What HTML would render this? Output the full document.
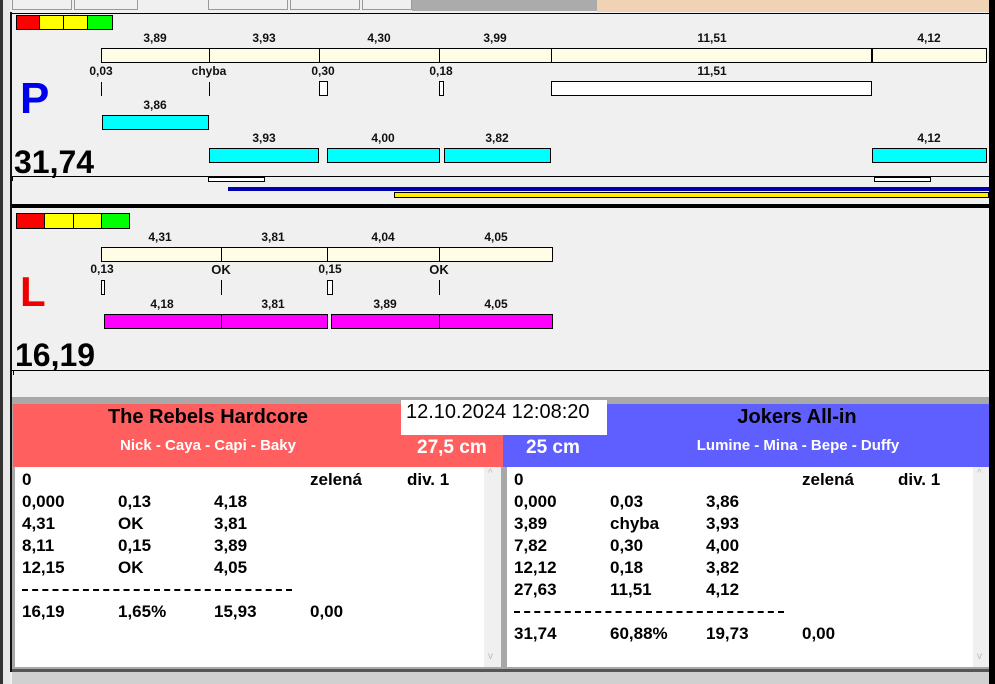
<!DOCTYPE html>
<html><head><meta charset="utf-8"><style>
*{margin:0;padding:0;box-sizing:border-box}
body{width:995px;height:684px;position:relative;background:#f0f0f0;font-family:"Liberation Sans",Arial,sans-serif;overflow:hidden}
div,span{position:absolute}
.t{font-weight:bold;font-size:12px;color:#111;white-space:nowrap;transform:translateX(-50%)}
.cr{background:#fffde6;border:1px solid #000;height:15px}
.cy{background:#00ffff;border:1px solid #000;height:15px}
.mg{background:#ff00ff;border:1px solid #000;height:15px}
.wb{background:#fff;border:1px solid #000}
.tk{width:1px;background:#000}
.row{font-weight:bold;font-size:17px;color:#000;white-space:nowrap}
</style></head><body>
<!-- top tabs -->
<div style="left:0;top:0;width:995px;height:12px;background:#f0f0f0"></div>
<div style="left:12px;top:0;width:60px;height:10px;border:1px solid #999;border-top:none;background:#f0f0f0"></div>
<div style="left:74px;top:0;width:64px;height:10px;border:1px solid #999;border-top:none;background:#f0f0f0"></div>
<div style="left:208px;top:0;width:80px;height:10px;border:1px solid #999;border-top:none;background:#f0f0f0"></div>
<div style="left:290px;top:0;width:70px;height:10px;border:1px solid #999;border-top:none;background:#f0f0f0"></div>
<div style="left:362px;top:0;width:50px;height:10px;border:1px solid #999;border-top:none;background:#f0f0f0"></div>
<div style="left:412px;top:0;width:185px;height:11px;background:#ababab"></div>
<div style="left:597px;top:0;width:393px;height:12px;background:#f0d2b4"></div>
<!-- left edge -->
<div style="left:0;top:0;width:3px;height:684px;background:#333"></div>
<div style="left:3px;top:0;width:7px;height:684px;background:#e8e8e8"></div>
<div style="left:10px;top:12px;width:2px;height:660px;background:#111"></div>
<!-- right edge -->
<div style="left:989px;top:0;width:6px;height:684px;background:#000"></div>
<!-- panel 1 -->
<div style="left:12px;top:13px;width:977px;height:1px;background:#000"></div>
<div style="left:16px;top:15px;width:24px;height:15px;background:#f00;border:1px solid #000"></div>
<div style="left:39px;top:15px;width:25px;height:15px;background:#ff0;border:1px solid #000"></div>
<div style="left:63px;top:15px;width:25px;height:15px;background:#ff0;border:1px solid #000"></div>
<div style="left:87px;top:15px;width:26px;height:15px;background:#0f0;border:1px solid #000"></div>

<span class="t" style="left:155px;top:31px">3,89</span>
<span class="t" style="left:264px;top:31px">3,93</span>
<span class="t" style="left:379px;top:31px">4,30</span>
<span class="t" style="left:495px;top:31px">3,99</span>
<span class="t" style="left:712px;top:31px">11,51</span>
<span class="t" style="left:929px;top:31px">4,12</span>
<div class="cr" style="left:101px;top:48px;width:886px"></div>
<div class="tk" style="left:209px;top:48px;height:15px"></div>
<div class="tk" style="left:319px;top:48px;height:15px"></div>
<div class="tk" style="left:439px;top:48px;height:15px"></div>
<div class="tk" style="left:551px;top:48px;height:15px"></div>
<div style="left:871px;top:48px;width:2px;height:15px;background:#000"></div>

<span class="t" style="left:101px;top:64px">0,03</span>
<span class="t" style="left:209px;top:64px">chyba</span>
<span class="t" style="left:323px;top:64px">0,30</span>
<span class="t" style="left:441px;top:64px">0,18</span>
<span class="t" style="left:712px;top:64px">11,51</span>
<div class="tk" style="left:101px;top:82px;height:14px"></div>
<div class="tk" style="left:209px;top:82px;height:14px"></div>
<div class="wb" style="left:319px;top:81px;width:9px;height:15px"></div>
<div class="wb" style="left:439px;top:81px;width:5px;height:15px"></div>
<div class="wb" style="left:551px;top:81px;width:321px;height:15px"></div>

<span style="left:20px;top:74px;font-size:44px;font-weight:bold;color:#0000ee;line-height:50px">P</span>
<span class="t" style="left:155px;top:98px">3,86</span>
<div class="cy" style="left:102px;top:115px;width:107px"></div>
<span class="t" style="left:264px;top:131px">3,93</span>
<span class="t" style="left:383px;top:131px">4,00</span>
<span class="t" style="left:497px;top:131px">3,82</span>
<span class="t" style="left:929px;top:131px">4,12</span>
<div class="cy" style="left:209px;top:148px;width:110px"></div>
<div class="cy" style="left:327px;top:148px;width:113px"></div>
<div class="cy" style="left:444px;top:148px;width:107px"></div>
<div class="cy" style="left:872px;top:148px;width:115px"></div>
<span style="left:14px;top:142px;font-size:32px;font-weight:bold;color:#000;line-height:40px">31,74</span>
<div style="left:12px;top:176px;width:977px;height:1px;background:#000"></div>
<div class="tk" style="left:12px;top:176px;height:5px"></div>
<div class="wb" style="left:208px;top:177px;width:57px;height:5px"></div>
<div class="wb" style="left:874px;top:177px;width:57px;height:5px"></div>
<div style="left:228px;top:187px;width:761px;height:4px;background:#0000b0"></div>
<div style="left:394px;top:192px;width:595px;height:6px;background:#ffee00;border:1px solid #000"></div>
<div style="left:12px;top:204px;width:977px;height:4px;background:#000"></div>

<!-- panel 2 -->
<div style="left:16px;top:213px;width:29px;height:16px;background:#f00;border:1px solid #000"></div>
<div style="left:44px;top:213px;width:30px;height:16px;background:#ff0;border:1px solid #000"></div>
<div style="left:73px;top:213px;width:29px;height:16px;background:#ff0;border:1px solid #000"></div>
<div style="left:101px;top:213px;width:29px;height:16px;background:#0f0;border:1px solid #000"></div>
<span class="t" style="left:160px;top:230px">4,31</span>
<span class="t" style="left:273px;top:230px">3,81</span>
<span class="t" style="left:383px;top:230px">4,04</span>
<span class="t" style="left:496px;top:230px">4,05</span>
<div class="cr" style="left:101px;top:247px;width:452px"></div>
<div class="tk" style="left:221px;top:247px;height:15px"></div>
<div class="tk" style="left:327px;top:247px;height:15px"></div>
<div class="tk" style="left:439px;top:247px;height:15px"></div>
<span class="t" style="left:102px;top:262px">0,13</span>
<span class="t" style="left:221px;top:262px;font-size:13px">OK</span>
<span class="t" style="left:330px;top:262px">0,15</span>
<span class="t" style="left:439px;top:262px;font-size:13px">OK</span>
<div class="wb" style="left:101px;top:280px;width:4px;height:15px"></div>
<div class="tk" style="left:221px;top:280px;height:15px"></div>
<div class="wb" style="left:327px;top:280px;width:6px;height:15px"></div>
<div class="tk" style="left:439px;top:280px;height:15px"></div>
<span style="left:20px;top:268px;font-size:42px;font-weight:bold;color:#ee0000;line-height:48px">L</span>
<span class="t" style="left:162px;top:297px">4,18</span>
<span class="t" style="left:273px;top:297px">3,81</span>
<span class="t" style="left:385px;top:297px">3,89</span>
<span class="t" style="left:496px;top:297px">4,05</span>
<div class="mg" style="left:104px;top:314px;width:118px"></div>
<div class="mg" style="left:221px;top:314px;width:107px"></div>
<div class="mg" style="left:331px;top:314px;width:109px"></div>
<div class="mg" style="left:439px;top:314px;width:114px"></div>
<span style="left:15px;top:335px;font-size:32px;font-weight:bold;color:#000;line-height:40px">16,19</span>
<div style="left:12px;top:370px;width:977px;height:1px;background:#000"></div>
<div class="tk" style="left:13px;top:370px;height:5px"></div>

<!-- bottom -->
<div style="left:12px;top:397px;width:977px;height:287px;background:#a8a8a8"></div>
<div style="left:13px;top:404px;width:490px;height:63px;background:#ff5f5f"></div>
<div style="left:503px;top:404px;width:486px;height:63px;background:#5f5fff"></div>
<span style="left:208px;top:406px;transform:translateX(-50%);font-size:20px;font-weight:bold;color:#000;white-space:nowrap">The Rebels Hardcore</span>
<span style="left:208px;top:437px;transform:translateX(-50%);font-size:15px;font-weight:bold;color:#fff;white-space:nowrap">Nick - Caya - Capi - Baky</span>
<span style="left:797px;top:406px;transform:translateX(-50%);font-size:20px;font-weight:bold;color:#000;white-space:nowrap">Jokers All-in</span>
<span style="left:798px;top:437px;transform:translateX(-50%);font-size:15px;font-weight:bold;color:#fff;white-space:nowrap">Lumine - Mina - Bepe - Duffy</span>
<div style="left:401px;top:400px;width:206px;height:35px;background:#fff"></div>
<span style="left:406px;top:401px;font-size:20px;color:#000;white-space:nowrap">12.10.2024 12:08:20</span>
<span style="left:417px;top:437px;font-size:19px;font-weight:bold;color:#fff;white-space:nowrap">27,5 cm</span>
<span style="left:526px;top:437px;font-size:19px;font-weight:bold;color:#fff;white-space:nowrap">25 cm</span>

<div style="left:15px;top:467px;width:486px;height:200px;background:#fff"></div>
<div style="left:484px;top:467px;width:17px;height:200px;background:#f0f0f0"></div>
<span style="left:488px;top:468px;font-size:10px;color:#bbb">^</span>
<span style="left:488px;top:651px;font-size:10px;color:#bbb">v</span>
<div style="left:507px;top:467px;width:482px;height:200px;background:#fff"></div>
<div style="left:973px;top:467px;width:16px;height:200px;background:#f0f0f0"></div>
<span style="left:977px;top:468px;font-size:10px;color:#bbb">^</span>
<span style="left:977px;top:651px;font-size:10px;color:#bbb">v</span>
<div style="left:12px;top:669px;width:977px;height:3px;background:#555"></div>
<div style="left:12px;top:672px;width:977px;height:12px;background:#d0d0d0"></div>

<div class="row" style="left:22px;top:469px;line-height:22px">
<div style="left:0;top:0">0</div><div style="left:288px;top:0">zelená</div><div style="left:385px;top:0">div. 1</div>
<div style="left:0;top:22px">0,000</div><div style="left:96px;top:22px">0,13</div><div style="left:192px;top:22px">4,18</div>
<div style="left:0;top:44px">4,31</div><div style="left:96px;top:44px">OK</div><div style="left:192px;top:44px">3,81</div>
<div style="left:0;top:66px">8,11</div><div style="left:96px;top:66px">0,15</div><div style="left:192px;top:66px">3,89</div>
<div style="left:0;top:88px">12,15</div><div style="left:96px;top:88px">OK</div><div style="left:192px;top:88px">4,05</div>
<div style="left:0;top:120px;width:270px;height:0;border-top:2px dashed #000"></div>
<div style="left:0;top:132px">16,19</div><div style="left:96px;top:132px">1,65%</div><div style="left:192px;top:132px">15,93</div><div style="left:288px;top:132px">0,00</div>
</div>
<div class="row" style="left:514px;top:469px;line-height:22px">
<div style="left:0;top:0">0</div><div style="left:288px;top:0">zelená</div><div style="left:384px;top:0">div. 1</div>
<div style="left:0;top:22px">0,000</div><div style="left:96px;top:22px">0,03</div><div style="left:192px;top:22px">3,86</div>
<div style="left:0;top:44px">3,89</div><div style="left:96px;top:44px">chyba</div><div style="left:192px;top:44px">3,93</div>
<div style="left:0;top:66px">7,82</div><div style="left:96px;top:66px">0,30</div><div style="left:192px;top:66px">4,00</div>
<div style="left:0;top:88px">12,12</div><div style="left:96px;top:88px">0,18</div><div style="left:192px;top:88px">3,82</div>
<div style="left:0;top:110px">27,63</div><div style="left:96px;top:110px">11,51</div><div style="left:192px;top:110px">4,12</div>
<div style="left:0;top:142px;width:270px;height:0;border-top:2px dashed #000"></div>
<div style="left:0;top:154px">31,74</div><div style="left:96px;top:154px">60,88%</div><div style="left:192px;top:154px">19,73</div><div style="left:288px;top:154px">0,00</div>
</div>
</body></html>
